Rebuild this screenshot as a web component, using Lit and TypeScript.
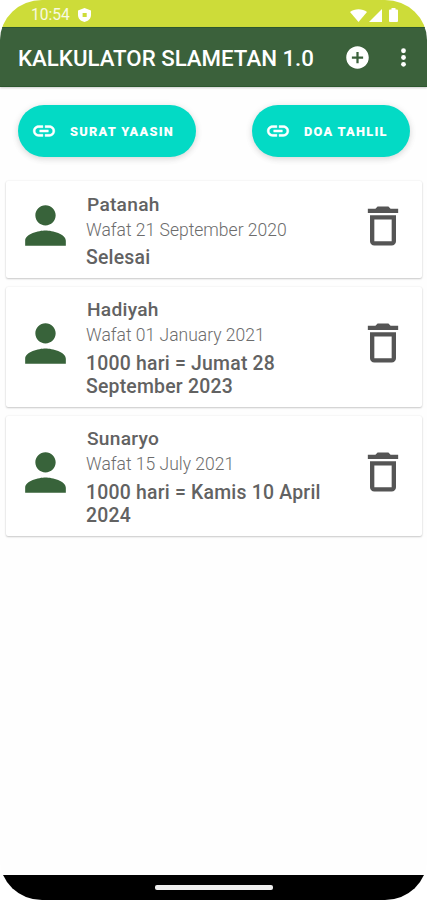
import { LitElement, html, css, svg } from "lit";
import { customElement, property } from "lit/decorators.js";

interface Entry {
  name: string;
  died: string;
  next: string;
}

const entries: Entry[] = [
  { name: "Patanah", died: "Wafat 21 September 2020", next: "Selesai" },
  { name: "Hadiyah", died: "Wafat 01 January 2021", next: "1000 hari = Jumat 28 September 2023" },
  { name: "Sunaryo", died: "Wafat 15 July 2021", next: "1000 hari = Kamis 10 April 2024" },
];

const icon = (cls: string, body: unknown, box = "0 0 24 24") =>
  html`<svg class=${cls} viewBox=${box} preserveAspectRatio="none" fill="currentColor" aria-hidden="true">${body}</svg>`;

@customElement("link-button")
export class LinkButton extends LitElement {
  @property() label = "";

  static styles = css`
    :host { display: block; }
    .pill {
      display: flex;
      align-items: center;
      box-sizing: border-box;
      width: 100%;
      height: 52px;
      padding: 0 0 0 13px;
      border: 0;
      border-radius: 26px;
      background: #03dac5;
      color: #fff;
      box-shadow: 0 2px 6px rgba(0, 0, 0, 0.12), 0 1px 10px rgba(0, 0, 0, 0.05);
      font: 900 12.8px/20px Roboto, sans-serif;
      letter-spacing: 1.25px;
      white-space: nowrap;
    }
    .link { width: 26px; height: 26px; margin-right: 13px; }
    .label { padding-top: 1px; }
  `;

  render() {
    return html`<button class="pill">
      ${icon("link", svg`<path stroke="currentColor" stroke-width=".4" d="M3.9 12c0-1.71 1.39-3.1 3.1-3.1h4V7H7c-2.76 0-5 2.24-5 5s2.24 5 5 5h4v-1.9H7c-1.71 0-3.1-1.39-3.1-3.1zM8 13h8v-2H8v2zm9-6h-4v1.9h4c1.71 0 3.1 1.39 3.1 3.1s-1.39 3.1-3.1 3.1h-4V17h4c2.76 0 5-2.24 5-5s-2.24-5-5-5z"/>`)}
      <span class="label">${this.label}</span>
    </button>`;
  }
}

@customElement("entry-card")
export class EntryCard extends LitElement {
  @property({ attribute: false }) entry!: Entry;

  static styles = css`
    :host { display: block; }
    .card {
      display: flex;
      box-sizing: border-box;
      align-items: center;
      padding: 10.5px 12px 9px 9px;
      background: #fff;
      border-radius: 2px;
      box-shadow: 0 1px 2px rgba(0, 0, 0, 0.2), 0 0 2px rgba(0, 0, 0, 0.08);
      font-family: Roboto, sans-serif;
      color: #626262;
    }
    .person { flex: none; width: 61px; height: 61px; margin: -9px 10px 0 0; color: #38633a; }
    .text { flex: none; width: 252px; margin-right: 19px; }
    .name { font-size: 19.2px; line-height: 25px; font-weight: 500; padding-left: 1px; letter-spacing: 0.25px; }
    .died { font-size: 17.5px; line-height: 27px; font-weight: 300; color: #6c6c6c; }
    .next { font-size: 19.4px; line-height: 23.2px; font-weight: 500; margin-top: 2.5px; letter-spacing: 0.22px; }
    .trash { flex: none; width: 52px; height: 52px; margin-top: -9px; color: #555; }
  `;

  render() {
    const { name, died, next } = this.entry;
    return html`<div class="card">
      ${icon("person", svg`<path d="M12 12c2.21 0 4-1.79 4-4s-1.79-4-4-4-4 1.79-4 4 1.79 4 4 4zm0 2c-2.67 0-8 1.34-8 4v2h16v-2c0-2.66-5.33-4-8-4z"/>`)}
      <div class="text">
        <div class="name">${name}</div>
        <div class="died">${died}</div>
        <div class="next">${next}</div>
      </div>
      ${icon("trash", svg`<path d="M6 19c0 1.1.9 2 2 2h8c1.1 0 2-.9 2-2V7H6v12zM8 9h8v10H8V9zm7.5-5l-1-1h-5l-1 1H5v2h14V4z"/>`)}
    </div>`;
  }
}

@customElement("app-root")
export class AppRoot extends LitElement {
  static styles = css`
    :host { display: block; background: #fff; }
    .screen {
      display: flex;
      flex-direction: column;
      width: 427px;
      height: 900px;
      overflow: hidden;
      border-radius: 42px / 40px;
      background: #fefefe;
      font-family: Roboto, sans-serif;
    }
    .status {
      display: flex;
      align-items: center;
      flex: none;
      height: 27px;
      box-sizing: border-box;
      padding: 3px 29px 0 31px;
      background: #cddc39;
      color: #fff;
      font-size: 15.6px;
    }
    .time { opacity: 0.85; }
    .shield { width: 13px; height: 14px; margin-left: 8px; }
    .signals { display: flex; align-items: center; margin-left: auto; }
    .wifi { width: 17px; height: 13px; }
    .cell { width: 13px; height: 13px; margin-left: 2px; }
    .battery { width: 9px; height: 14px; margin-left: 7px; }
    .bar {
      display: flex;
      align-items: center;
      flex: none;
      height: 60px;
      box-sizing: border-box;
      padding: 0 11px 0 18px;
      background: #3b613b;
      border-top: 1px solid #2c572e;
      border-bottom: 1px solid #2c572e;
      box-shadow: 0 1px 2px rgba(0, 0, 0, 0.2);
      color: #fff;
    }
    .title { margin: 0; padding-top: 2px; flex: 1; font-size: 22.25px; font-weight: 500; white-space: nowrap; }
    .add { width: 27px; height: 27px; margin-right: 20px; }
    .more { width: 25px; height: 25px; }
    .links { display: flex; justify-content: space-between; flex: none; padding: 18px 17px 24px 18px; }
    .yaasin { width: 178px; }
    .tahlil { width: 158px; }
    .list { display: flex; flex-direction: column; gap: 8.5px; flex: 1; padding: 0 5px 0 6px; }
    .nav {
      display: flex;
      align-items: center;
      justify-content: center;
      flex: none;
      height: 25px;
      background: #000;
    }
    .handle { width: 118px; height: 5px; border-radius: 2px; background: #eee; }
  `;

  render() {
    return html`<div class="screen">
      <div class="status">
        <span class="time">10:54</span>
        ${icon("shield", svg`<path fill-rule="evenodd" d="M6.5 0L0 2.4V7c0 3.7 2.8 6.2 6.5 7C10.200 13.200 13 10.700 13 7V2.400zM4.600 5h4.100v3.900h-4.100z"/>`, "0 0 13 14")}
        <div class="signals">
          ${icon("wifi", svg`<path d="M0 3C4.500-.8 12.500-.8 17 3L8.500 13z"/>`, "0 0 17 13")}
          ${icon("cell", svg`<path d="M13 0v13H0z"/>`, "0 0 13 13")}
          ${icon("battery", svg`<path d="M2.500 0h4v1.500H8a1 1 0 0 1 1 1V13a1 1 0 0 1-1 1H1a1 1 0 0 1-1-1V2.500a1 1 0 0 1 1-1h1.500z"/>`, "0 0 9 14")}
        </div>
      </div>
      <header class="bar">
        <h1 class="title">KALKULATOR SLAMETAN 1.0</h1>
        ${icon("add", svg`<path d="M12 2C6.480 2 2 6.480 2 12s4.480 10 10 10 10-4.480 10-10S17.520 2 12 2zm5 11h-4v4h-2v-4H7v-2h4V7h2v4h4v2z"/>`)}
        ${icon("more", svg`<circle cx="12" cy="5.500" r="2.300"/><circle cx="12" cy="12" r="2.300"/><circle cx="12" cy="18.500" r="2.300"/>`)}
      </header>
      <div class="links">
        <link-button class="yaasin" label="SURAT YAASIN"></link-button>
        <link-button class="tahlil" label="DOA TAHLIL"></link-button>
      </div>
      <main class="list">${entries.map((e) => html`<entry-card .entry=${e}></entry-card>`)}</main>
      <div class="nav"><div class="handle"></div></div>
    </div>`;
  }
}
